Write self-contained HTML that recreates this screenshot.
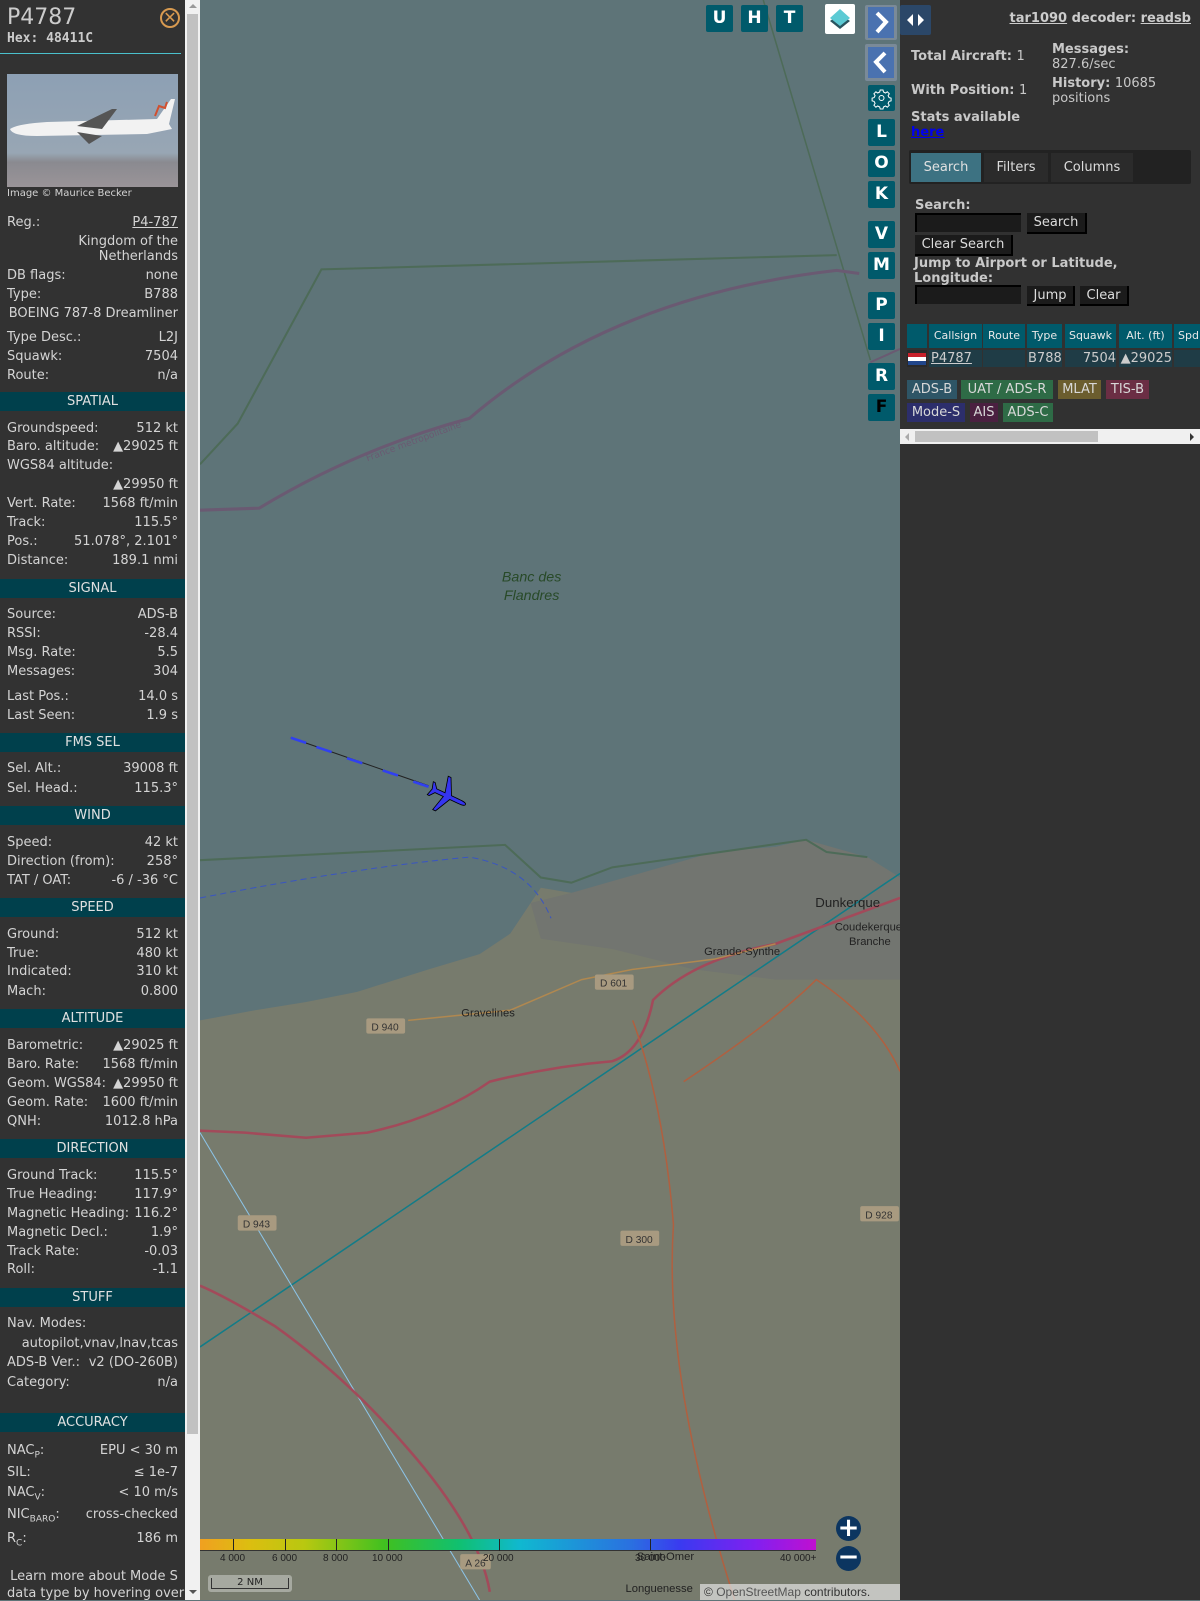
<!DOCTYPE html>
<html><head><meta charset="utf-8">
<style>
*{box-sizing:border-box;margin:0;padding:0}
body{width:1200px;height:1600px;overflow:hidden;background:#5e7478;font-family:"DejaVu Sans","Liberation Sans",sans-serif;position:relative}
#map{position:absolute;left:0;top:0}
#left{position:absolute;left:0;top:0;width:185px;height:1600px;background:#323232;color:#d4d4d4;font-size:13px}
#lsb{position:absolute;left:185px;top:0;width:15px;height:1600px;background:#f1f1f1}
#lsb .th{position:absolute;left:2px;top:14px;width:11px;height:1420px;background:#c1c1c1}
.r{position:absolute;left:7px;right:7px;height:18px;line-height:18px;display:flex;justify-content:space-between;white-space:nowrap}
.rr{position:absolute;left:7px;right:7px;height:18px;line-height:18px;text-align:right;white-space:nowrap}
.h{position:absolute;left:0;width:185px;height:19px;line-height:19px;background:#00404c;color:#e0e0e0;text-align:center;font-size:13px}
.btn{position:absolute;width:27px;height:27px;background:#005a6b;color:#fff;font-weight:bold;font-size:17px;text-align:center;line-height:27px;border-radius:2px}
#right{position:absolute;left:900px;top:0;width:300px;height:1600px;background:#313131;color:#c8c8c8;font-size:13px}
.b{font-weight:bold}
.t{position:absolute;white-space:nowrap}
.in{position:absolute;background:#1b1b1b;border-top:2px solid #000;border-left:2px solid #000}
.bt{position:absolute;background:#1b1b1b;color:#ddd;font-size:13px;text-align:center;border-right:2px solid #000;border-bottom:2px solid #000;line-height:19px}
.th2{position:absolute;top:324px;height:24px;background:#005a6b;color:#e8e8e8;font-size:11px;line-height:24px;text-align:center}
.td{position:absolute;top:350px;height:17px;background:#1f3c46;color:#ccc;font-size:13px;line-height:17px}
.bd{position:absolute;height:19px;line-height:19px;font-size:13px;color:#d8d8d8;text-align:center;white-space:nowrap;overflow:hidden}
</style></head><body>
<svg id="map" width="1200" height="1600" viewBox="0 0 1176 1568">
<rect x="0" y="0" width="1176" height="1568" fill="#5e7478"/>
<polygon points="196,1000 250,990 300,982 350,972 420,950 470,935 500,915 520,885 530,870 560,875 600,868 640,860 700,835 760,830 790,823 810,830 850,840 882,860 882,1568 196,1568" fill="#777b6d"/>
<polygon points="520,885 560,875 700,835 760,830 790,823 850,840 882,860 882,960 760,960 680,950 600,930 530,920" fill="#727570"/>
<g fill="none">
<polyline points="196,455 233,415 315,264 820,250" stroke="#4d6b58" stroke-width="2"/>
<line x1="748" y1="0" x2="853" y2="353" stroke="#4d6b58" stroke-width="1.5"/>
<path d="M196,500 L254,498 Q350,440 460,410 Q600,290 820,265 L842,268" stroke="#6a5a72" stroke-width="3"/>
<line x1="853" y1="355" x2="882" y2="342" stroke="#6a5a72" stroke-width="2"/>
<polyline points="196,843 495,828 530,860 560,865 600,850 790,823 810,835 850,840" stroke="#4d6b58" stroke-width="2"/>
<path d="M196,880 Q350,850 460,840 Q520,850 540,900" stroke="#3a55c0" stroke-width="1" stroke-dasharray="6,4"/>
<line x1="196" y1="1320" x2="882" y2="856" stroke="#127c88" stroke-width="1.5"/>
<line x1="196" y1="1110" x2="470" y2="1568" stroke="#8cc4e8" stroke-width="1"/>
<path d="M196,1108 L240,1110 L300,1115 L360,1110 Q430,1095 480,1060 Q540,1045 600,1040 Q630,1030 640,980 Q680,940 760,925 L882,880" stroke="#a24a5a" stroke-width="2.5"/>
<path d="M620,1000 Q650,1080 660,1200 Q650,1350 720,1568" stroke="#b06040" stroke-width="1.5"/>
<path d="M480,1560 Q470,1500 400,1420 Q340,1350 270,1300 Q220,1270 196,1260" stroke="#a24a5a" stroke-width="2.5"/>
<path d="M670,1060 Q760,1000 800,960 Q860,1000 882,1050" stroke="#b06040" stroke-width="1.5"/>
<path d="M400,1000 L500,990 L570,960 L620,950 L700,940 L760,925" stroke="#b08850" stroke-width="1.5"/>
<path d="M285,723 L420,770" stroke="#222" stroke-width="1"/>
<path d="M285,723 L300,728 M310,732 L325,737 M340,743 L355,748 M375,755 L390,760 M405,766 L420,771" stroke="#3040f0" stroke-width="2.5"/>
</g>
<g transform="translate(438,780) rotate(115)" fill="#3535f0" stroke="#000" stroke-width="0.8">
<path d="M0,-20 C2,-20 2,-16 2,-12 L2,-4 L18,4 L18,7 L2,3 L2,12 L7,16 L7,18 L0,16 L-7,18 L-7,16 L-2,12 L-2,3 L-18,7 L-18,4 L-2,-4 L-2,-12 C-2,-16 -2,-20 0,-20Z"/>
</g>
<g font-family="Liberation Sans,sans-serif" font-style="italic" fill="#284a28" font-size="14" text-anchor="middle">
<text x="521" y="570">Banc des</text><text x="521" y="588">Flandres</text>
</g>
<text x="360" y="452" font-size="9" fill="#6a5a72" transform="rotate(-20 360 452)">France métropolitaine</text>
<g font-size="11" fill="#222" font-family="Liberation Sans,sans-serif">
<text x="799" y="889" font-size="13">Dunkerque</text><text x="690" y="936">Grande-Synthe</text>
<text x="452" y="996">Gravelines</text><text x="818" y="912">Coudekerque</text><text x="832" y="926">Branche</text>
<text x="624" y="1529">Saint-Omer</text><text x="613" y="1560">Longuenesse</text>
</g>
<g font-size="10" fill="#333" font-family="Liberation Sans,sans-serif">
<rect x="583" y="955" width="38" height="15" fill="#a89a80" rx="2"/><text x="588" y="967">D 601</text>
<rect x="359" y="998" width="38" height="15" fill="#a89a80" rx="2"/><text x="364" y="1010">D 940</text>
<rect x="233" y="1191" width="38" height="15" fill="#a89a80" rx="2"/><text x="238" y="1203">D 943</text>
<rect x="608" y="1206" width="38" height="15" fill="#a89a80" rx="2"/><text x="613" y="1218">D 300</text>
<rect x="843" y="1182" width="38" height="15" fill="#a89a80" rx="2"/><text x="848" y="1194">D 928</text>
<rect x="451" y="1523" width="30" height="15" fill="#a89a80" rx="2"/><text x="456" y="1535">A 26</text>
</g>
</svg>

<div style="position:absolute;left:200px;top:1539px;width:616px;height:12px;background:linear-gradient(to right,#f0a020 0%,#dcbe10 8%,#b8c810 17%,#40c020 30%,#10c070 42%,#10b8d0 52%,#2a70e0 70%,#3a3af0 78%,#8020f0 90%,#c010d0 100%);border-bottom:1px solid #333"></div>
<div style="position:absolute;left:233px;top:1539px;width:1px;height:12px;background:#222"></div>
<div style="position:absolute;left:285px;top:1539px;width:1px;height:12px;background:#222"></div>
<div style="position:absolute;left:336px;top:1539px;width:1px;height:12px;background:#222"></div>
<div style="position:absolute;left:388px;top:1539px;width:1px;height:12px;background:#222"></div>
<div style="position:absolute;left:499px;top:1539px;width:1px;height:12px;background:#222"></div>
<div style="position:absolute;left:650px;top:1539px;width:1px;height:12px;background:#222"></div>
<div style="position:absolute;top:1553px;font-size:10px;color:#222;font-family:'Liberation Sans',sans-serif">
<span class="t" style="left:220px">4 000</span><span class="t" style="left:272px">6 000</span><span class="t" style="left:323px">8 000</span><span class="t" style="left:372px">10 000</span><span class="t" style="left:483px">20 000</span><span class="t" style="left:635px">30 000</span><span class="t" style="left:780px">40 000+</span></div>
<div style="position:absolute;left:208px;top:1575px;width:84px;height:17px;background:rgba(255,255,255,0.35);border-radius:3px"><div style="margin:3px 3px;border:1px solid #333;border-top:none;height:11px;font-size:10px;text-align:center;line-height:10px;color:#222">2 NM</div></div>
<div style="position:absolute;left:700px;top:1584px;width:200px;height:16px;background:rgba(220,220,220,0.75);font-size:12px;color:#333;line-height:16px;padding-left:4px;font-family:'Liberation Sans',sans-serif">© <span style="color:#555">OpenStreetMap</span> contributors.</div>
<div style="position:absolute;left:836px;top:1516px;width:25px;height:25px;border-radius:50%;background:#0c3560;color:#fff;font-size:26px;line-height:24px;text-align:center;font-weight:bold">+</div>
<div style="position:absolute;left:836px;top:1546px;width:25px;height:25px;border-radius:50%;background:#0c3560;color:#fff;font-size:26px;line-height:22px;text-align:center;font-weight:bold">−</div>

<div class="btn" style="left:706px;top:5px">U</div>
<div class="btn" style="left:741px;top:5px">H</div>
<div class="btn" style="left:776px;top:5px">T</div>
<div style="position:absolute;left:825px;top:4px;width:30px;height:30px;background:#fff;border-radius:2px">
<svg width="30" height="30"><path d="M5,17 L15,25 L25,17 L15,10Z" fill="#2a5560"/><path d="M5,14 L15,22 L25,14 L15,5Z" fill="#5ccad4"/></svg></div>
<div style="position:absolute;left:865px;top:5px;width:32px;height:35px;background:#7a8a98;border-radius:2px"><div style="position:absolute;left:3px;top:2px;width:26px;height:31px;background:#4a72b0"><svg width="26" height="31"><path d="M9,6 L18,15 L9,25" stroke="#fff" stroke-width="4" fill="none"/></svg></div></div>
<div style="position:absolute;left:865px;top:44px;width:32px;height:37px;background:#7a8a98;border-radius:2px"><div style="position:absolute;left:3px;top:3px;width:26px;height:31px;background:#4a72b0"><svg width="26" height="31"><path d="M17,6 L8,15 L17,25" stroke="#fff" stroke-width="4" fill="none"/></svg></div></div>
<div class="btn" style="left:868px;top:85px;height:26px"><svg width="27" height="26"><circle cx="13.5" cy="13" r="2.5" fill="none" stroke="#fff" stroke-width="1"/><path d="M13.5,5 l1.5,0 l0.5,2 l2,1 l1.8,-1.2 l2,2 l-1.2,1.8 l1,2 l2,0.5 l0,2.8 l-2,0.5 l-1,2 l1.2,1.8 l-2,2 l-1.8,-1.2 l-2,1 l-0.5,2 l-2.8,0 l-0.5,-2 l-2,-1 l-1.8,1.2 l-2,-2 l1.2,-1.8 l-1,-2 l-2,-0.5 l0,-2.8 l2,-0.5 l1,-2 l-1.2,-1.8 l2,-2 l1.8,1.2 l2,-1 l0.5,-2Z" fill="none" stroke="#fff" stroke-width="1"/></svg></div>
<div class="btn" style="left:868px;top:119px">L</div>
<div class="btn" style="left:868px;top:150px">O</div>
<div class="btn" style="left:868px;top:181px">K</div>
<div class="btn" style="left:868px;top:221px">V</div>
<div class="btn" style="left:868px;top:252px">M</div>
<div class="btn" style="left:868px;top:292px">P</div>
<div class="btn" style="left:868px;top:323px">I</div>
<div class="btn" style="left:868px;top:363px">R</div>
<div class="btn" style="left:868px;top:394px;color:#000">F</div>

<div id="left">
<div class="t" style="left:7px;top:5px;font-size:22px;color:#ccc">P4787</div>
<div class="t b" style="left:7px;top:31px;font-family:'DejaVu Sans Mono',monospace;font-size:13px;color:#ccc">Hex: 48411C</div>
<div style="position:absolute;left:160px;top:8px;width:20px;height:20px;border:2px solid #d89a50;border-radius:50%;color:#d89a50;font-size:16px;line-height:15px;text-align:center">✕</div>
<div style="position:absolute;left:0;top:53px;width:181px;height:1px;background:#4ac0cc"></div>
<div style="position:absolute;left:7px;top:74px;width:171px;height:113px;background:linear-gradient(#8da0b4 0%,#98a6b4 70%,#8a8a90 78%,#9a9498 100%)">
<svg width="171" height="113"><path d="M3,55 Q10,50 40,48 L150,45 L164,25 L168,25 L162,50 L165,55 L140,60 L30,62 Q5,62 3,55Z" fill="#f2f2f2"/><path d="M70,52 L105,35 L110,35 L95,55Z M70,58 L95,62 L82,70Z" fill="#555"/><path d="M148,42 l4,-10 l6,2 l2,-6" stroke="#d05030" stroke-width="2" fill="none"/></svg></div>
<div class="t" style="left:7px;top:188px;font-size:10px">Image © Maurice Becker</div>
<div class="r" style="top:214px"><span>Reg.:</span><span style="text-decoration:underline">P4-787</span></div>
<div class="rr" style="top:233px">Kingdom of the</div>
<div class="rr" style="top:248px">Netherlands</div>
<div class="r" style="top:267px"><span>DB flags:</span><span>none</span></div>
<div class="r" style="top:286px"><span>Type:</span><span>B788</span></div>
<div class="rr" style="top:305px">BOEING 787-8 Dreamliner</div>
<div class="r" style="top:329px"><span>Type Desc.:</span><span>L2J</span></div>
<div class="r" style="top:348px"><span>Squawk:</span><span>7504</span></div>
<div class="r" style="top:367px"><span>Route:</span><span>n/a</span></div>
<div class="h" style="top:392px">SPATIAL</div>
<div class="r" style="top:420px"><span>Groundspeed:</span><span>512 kt</span></div>
<div class="r" style="top:438px"><span>Baro. altitude:</span><span>▲29025 ft</span></div>
<div class="r" style="top:457px"><span>WGS84 altitude:</span><span></span></div>
<div class="rr" style="top:476px">▲29950 ft</div>
<div class="r" style="top:495px"><span>Vert. Rate:</span><span>1568 ft/min</span></div>
<div class="r" style="top:514px"><span>Track:</span><span>115.5°</span></div>
<div class="r" style="top:533px"><span>Pos.:</span><span>51.078°, 2.101°</span></div>
<div class="r" style="top:552px"><span>Distance:</span><span>189.1 nmi</span></div>
<div class="h" style="top:579px">SIGNAL</div>
<div class="r" style="top:606px"><span>Source:</span><span>ADS-B</span></div>
<div class="r" style="top:625px"><span>RSSI:</span><span>-28.4</span></div>
<div class="r" style="top:644px"><span>Msg. Rate:</span><span>5.5</span></div>
<div class="r" style="top:663px"><span>Messages:</span><span>304</span></div>
<div class="r" style="top:688px"><span>Last Pos.:</span><span>14.0 s</span></div>
<div class="r" style="top:707px"><span>Last Seen:</span><span>1.9 s</span></div>
<div class="h" style="top:733px">FMS SEL</div>
<div class="r" style="top:760px"><span>Sel. Alt.:</span><span>39008 ft</span></div>
<div class="r" style="top:780px"><span>Sel. Head.:</span><span>115.3°</span></div>
<div class="h" style="top:806px">WIND</div>
<div class="r" style="top:834px"><span>Speed:</span><span>42 kt</span></div>
<div class="r" style="top:853px"><span>Direction (from):</span><span>258°</span></div>
<div class="r" style="top:872px"><span>TAT / OAT:</span><span>-6 / -36 °C</span></div>
<div class="h" style="top:898px">SPEED</div>
<div class="r" style="top:926px"><span>Ground:</span><span>512 kt</span></div>
<div class="r" style="top:945px"><span>True:</span><span>480 kt</span></div>
<div class="r" style="top:963px"><span>Indicated:</span><span>310 kt</span></div>
<div class="r" style="top:983px"><span>Mach:</span><span>0.800</span></div>
<div class="h" style="top:1009px">ALTITUDE</div>
<div class="r" style="top:1037px"><span>Barometric:</span><span>▲29025 ft</span></div>
<div class="r" style="top:1056px"><span>Baro. Rate:</span><span>1568 ft/min</span></div>
<div class="r" style="top:1075px"><span>Geom. WGS84:</span><span>▲29950 ft</span></div>
<div class="r" style="top:1094px"><span>Geom. Rate:</span><span>1600 ft/min</span></div>
<div class="r" style="top:1113px"><span>QNH:</span><span>1012.8 hPa</span></div>
<div class="h" style="top:1139px">DIRECTION</div>
<div class="r" style="top:1167px"><span>Ground Track:</span><span>115.5°</span></div>
<div class="r" style="top:1186px"><span>True Heading:</span><span>117.9°</span></div>
<div class="r" style="top:1205px"><span>Magnetic Heading:</span><span>116.2°</span></div>
<div class="r" style="top:1224px"><span>Magnetic Decl.:</span><span>1.9°</span></div>
<div class="r" style="top:1243px"><span>Track Rate:</span><span>-0.03</span></div>
<div class="r" style="top:1261px"><span>Roll:</span><span>-1.1</span></div>
<div class="h" style="top:1288px">STUFF</div>
<div class="r" style="top:1315px"><span>Nav. Modes:</span><span></span></div>
<div class="rr" style="top:1335px">autopilot,vnav,lnav,tcas</div>
<div class="r" style="top:1354px"><span>ADS-B Ver.:</span><span>v2 (DO-260B)</span></div>
<div class="r" style="top:1374px"><span>Category:</span><span>n/a</span></div>
<div class="h" style="top:1413px">ACCURACY</div>
<div class="r" style="top:1442px"><span>NAC<sub style="font-size:9px">P</sub>:</span><span>EPU &lt; 30 m</span></div>
<div class="r" style="top:1464px"><span>SIL:</span><span>≤ 1e-7</span></div>
<div class="r" style="top:1484px"><span>NAC<sub style="font-size:9px">V</sub>:</span><span>&lt; 10 m/s</span></div>
<div class="r" style="top:1506px"><span>NIC<sub style="font-size:9px">BARO</sub>:</span><span>cross-checked</span></div>
<div class="r" style="top:1530px"><span>R<sub style="font-size:9px">C</sub>:</span><span>186 m</span></div>
<div class="t" style="left:7px;top:1569px;width:174px;text-align:center">Learn more about Mode S</div>
<div class="t" style="left:7px;top:1586px;width:174px;text-align:center">data type by hovering over</div>
</div>
<div id="lsb"><div class="th"></div><div style="position:absolute;left:4px;top:4px;border:4px solid transparent;border-bottom:4px solid #999;border-top:none"></div><div style="position:absolute;left:4px;top:1590px;border:4px solid transparent;border-top:4px solid #555;border-bottom:none"></div></div>

<div id="right">
<div style="position:absolute;left:0;top:5px;width:31px;height:30px;background:#2b4768;border-radius:2px"><svg width="31" height="30"><path d="M13,9 L7,15 L13,21Z M18,9 L24,15 L18,21Z" fill="#fff"/></svg></div>
<div class="t b" style="right:9px;top:11px;color:#ccc"><u>tar1090</u> decoder: <u>readsb</u></div>
<div class="t b" style="left:11px;top:49px">Total Aircraft: <span style="font-weight:normal">1</span></div>
<div class="t b" style="left:152px;top:42px">Messages:</div>
<div class="t" style="left:152px;top:57px">827.6/sec</div>
<div class="t b" style="left:11px;top:83px">With Position: <span style="font-weight:normal">1</span></div>
<div class="t b" style="left:152px;top:76px">History: <span style="font-weight:normal">10685</span></div>
<div class="t" style="left:152px;top:91px">positions</div>
<div class="t b" style="left:11px;top:110px">Stats available</div>
<div class="t b" style="left:11px;top:125px;color:#0000ee;text-decoration:underline">here</div>
<div style="position:absolute;left:9px;top:150px;width:282px;height:34px;background:#222;border-radius:2px"></div>
<div class="t" style="left:11px;top:153px;width:70px;height:29px;background:#3d7282;color:#e0e0e0;text-align:center;line-height:29px">Search</div>
<div class="t" style="left:84px;top:153px;width:64px;height:29px;background:#2b2b2b;text-align:center;line-height:29px;color:#ddd">Filters</div>
<div class="t" style="left:151px;top:153px;width:82px;height:29px;background:#2b2b2b;text-align:center;line-height:29px;color:#ddd">Columns</div>
<div class="t b" style="left:15px;top:198px">Search:</div>
<div class="in" style="left:15px;top:213px;width:106px;height:19px"></div>
<div class="bt" style="left:127px;top:213px;width:60px;height:21px">Search</div>
<div class="bt" style="left:15px;top:235px;width:98px;height:21px">Clear Search</div>
<div class="t b" style="left:14px;top:256px">Jump to Airport or Latitude,</div>
<div class="t b" style="left:14px;top:271px">Longitude:</div>
<div class="in" style="left:15px;top:285px;width:106px;height:19px"></div>
<div class="bt" style="left:127px;top:286px;width:48px;height:20px">Jump</div>
<div class="bt" style="left:180px;top:286px;width:49px;height:20px">Clear</div>
<div class="th2" style="left:7px;width:20px"></div>
<div class="th2" style="left:29px;width:53px">Callsign</div>
<div class="th2" style="left:83px;width:42px">Route</div>
<div class="th2" style="left:127px;width:35px">Type</div>
<div class="th2" style="left:165px;width:51px">Squawk</div>
<div class="th2" style="left:219px;width:53px">Alt. (ft)</div>
<div class="th2" style="left:274px;width:26px;text-align:left;padding-left:4px">Spd</div>
<div class="td" style="left:7px;width:20px;background:#2a2a2a"><div style="margin:3px 1px;height:12px;background:linear-gradient(#c8202a 33%,#fff 33%,#fff 66%,#21468b 66%)"></div></div>
<div class="td" style="left:29px;width:53px;padding-left:2px;text-decoration:underline">P4787</div>
<div class="td" style="left:83px;width:42px"></div>
<div class="td" style="left:127px;width:35px;padding-left:1px">B788</div>
<div class="td" style="left:165px;width:51px;text-align:right">7504</div>
<div class="td" style="left:219px;width:53px;text-align:right">▲29025</div>
<div class="td" style="left:274px;width:26px"></div>
<div class="bd" style="left:7px;top:380px;width:50px;background:#2e5566">ADS-B</div>
<div class="bd" style="left:61px;top:380px;width:92px;background:#2e6b46">UAT / ADS-R</div>
<div class="bd" style="left:158px;top:380px;width:43px;background:#6b5d2e">MLAT</div>
<div class="bd" style="left:206px;top:380px;width:43px;background:#6b2e44">TIS-B</div>
<div class="bd" style="left:7px;top:403px;width:58px;background:#2c2e6b">Mode-S</div>
<div class="bd" style="left:70px;top:403px;width:28px;background:#4a2040">AIS</div>
<div class="bd" style="left:103px;top:403px;width:50px;background:#2e6b46">ADS-C</div>
<div style="position:absolute;left:0;top:429px;width:300px;height:15px;background:#f0f0f0"><div style="position:absolute;left:15px;top:2px;width:183px;height:11px;background:#c1c1c1"></div><div style="position:absolute;left:5px;top:4px;border:4px solid transparent;border-right:4px solid #aaa;border-left:none"></div><div style="position:absolute;left:290px;top:4px;border:4px solid transparent;border-left:4px solid #333;border-right:none"></div></div>
</div>
</body></html>
